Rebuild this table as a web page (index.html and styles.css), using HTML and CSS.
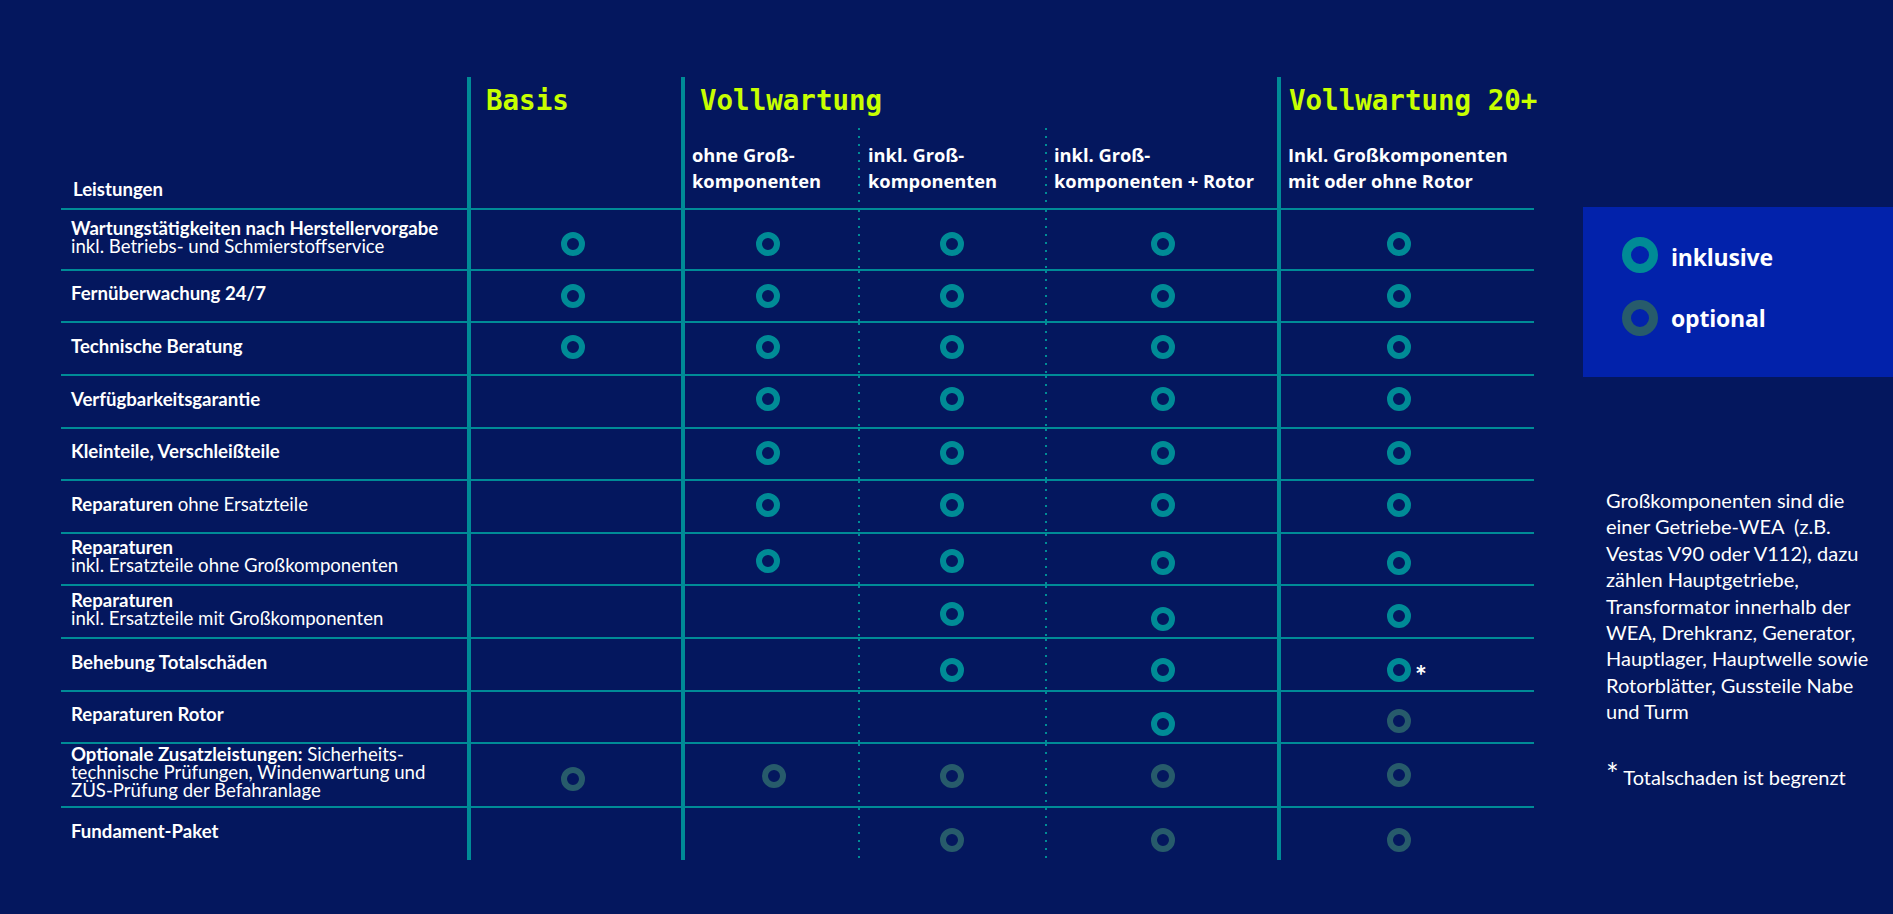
FILE: index.html
```html
<!DOCTYPE html>
<html lang="de">
<head>
<meta charset="utf-8">
<title>Leistungsübersicht Wartung</title>
<link rel="stylesheet" href="styles.css">
</head>
<body>
<main class="page">
  <section class="matrix">
    <div class="hd-label">Leistungen</div>
    <div class="hd-title c2 basis">Basis</div>
    <div class="hd-title c3 voll">Vollwartung</div>
    <div class="hd-title c6 plus">Vollwartung 20+</div>
    <div class="hd-sub c2"></div>
    <div class="hd-sub c3">ohne Groß-<br>komponenten</div>
    <div class="hd-sub c4">inkl. Groß-<br>komponenten</div>
    <div class="hd-sub c5">inkl. Groß-<br>komponenten + Rotor</div>
    <div class="hd-sub c6">Inkl. Großkomponenten<br>mit oder ohne Rotor</div>

    <div class="cell lbl"><div><b>Wartungstätigkeiten nach Herstellervorgabe</b><br>inkl. Betriebs- und Schmierstoffservice</div></div>
    <div class="cell mk c2"><span class="dot y4"></span></div>
    <div class="cell mk c3"><span class="dot y4"></span></div>
    <div class="cell mk c4"><span class="dot y4"></span></div>
    <div class="cell mk c5"><span class="dot y4"></span></div>
    <div class="cell mk c6"><span class="dot y4"></span></div>

    <div class="cell lbl"><div><b>Fernüberwachung 24/7</b></div></div>
    <div class="cell mk c2"><span class="dot"></span></div>
    <div class="cell mk c3"><span class="dot"></span></div>
    <div class="cell mk c4"><span class="dot"></span></div>
    <div class="cell mk c5"><span class="dot"></span></div>
    <div class="cell mk c6"><span class="dot"></span></div>

    <div class="cell lbl"><div><b>Technische Beratung</b></div></div>
    <div class="cell mk c2"><span class="dot u2"></span></div>
    <div class="cell mk c3"><span class="dot u2"></span></div>
    <div class="cell mk c4"><span class="dot u2"></span></div>
    <div class="cell mk c5"><span class="dot u2"></span></div>
    <div class="cell mk c6"><span class="dot u2"></span></div>

    <div class="cell lbl"><div><b>Verfügbarkeitsgarantie</b></div></div>
    <div class="cell mk c2"></div>
    <div class="cell mk c3"><span class="dot u3"></span></div>
    <div class="cell mk c4"><span class="dot u3"></span></div>
    <div class="cell mk c5"><span class="dot u3"></span></div>
    <div class="cell mk c6"><span class="dot u3"></span></div>

    <div class="cell lbl"><div><b>Kleinteile, Verschleißteile</b></div></div>
    <div class="cell mk c2"></div>
    <div class="cell mk c3"><span class="dot u1"></span></div>
    <div class="cell mk c4"><span class="dot u1"></span></div>
    <div class="cell mk c5"><span class="dot u1"></span></div>
    <div class="cell mk c6"><span class="dot u1"></span></div>

    <div class="cell lbl"><div><b>Reparaturen</b> ohne Ersatzteile</div></div>
    <div class="cell mk c2"></div>
    <div class="cell mk c3"><span class="dot u2"></span></div>
    <div class="cell mk c4"><span class="dot u2"></span></div>
    <div class="cell mk c5"><span class="dot u2"></span></div>
    <div class="cell mk c6"><span class="dot u2"></span></div>

    <div class="cell lbl"><div><b>Reparaturen</b><br>inkl. Ersatzteile ohne Großkomponenten</div></div>
    <div class="cell mk c2"></div>
    <div class="cell mk c3"><span class="dot y2"></span></div>
    <div class="cell mk c4"><span class="dot y2"></span></div>
    <div class="cell mk c5"><span class="dot y4"></span></div>
    <div class="cell mk c6"><span class="dot y4"></span></div>

    <div class="cell lbl"><div><b>Reparaturen</b><br>inkl. Ersatzteile mit Großkomponenten</div></div>
    <div class="cell mk c2"></div>
    <div class="cell mk c3"></div>
    <div class="cell mk c4"><span class="dot y2"></span></div>
    <div class="cell mk c5"><span class="dot y7"></span></div>
    <div class="cell mk c6"><span class="dot y4"></span></div>

    <div class="cell lbl"><div><b>Behebung Totalschäden</b></div></div>
    <div class="cell mk c2"></div>
    <div class="cell mk c3"></div>
    <div class="cell mk c4"><span class="dot y5"></span></div>
    <div class="cell mk c5"><span class="dot y5"></span></div>
    <div class="cell mk c6"><span class="starred y5"><span class="dot"></span><span class="star">*</span></span></div>

    <div class="cell lbl"><div><b>Reparaturen Rotor</b></div></div>
    <div class="cell mk c2"></div>
    <div class="cell mk c3"></div>
    <div class="cell mk c4"></div>
    <div class="cell mk c5"><span class="dot y7"></span></div>
    <div class="cell mk c6"><span class="dot opt y4"></span></div>

    <div class="cell lbl"><div><b>Optionale Zusatzleistungen:</b> Sicherheits-<br>technische Prüfungen, Windenwartung und<br>ZÜS-Prüfung der Befahranlage</div></div>
    <div class="cell mk c2"><span class="dot opt y4"></span></div>
    <div class="cell mk c3"><span class="dot opt y1 x6"></span></div>
    <div class="cell mk c4"><span class="dot opt y1"></span></div>
    <div class="cell mk c5"><span class="dot opt y1"></span></div>
    <div class="cell mk c6"><span class="dot opt"></span></div>

    <div class="cell lbl"><div><b>Fundament-Paket</b></div></div>
    <div class="cell mk c2"></div>
    <div class="cell mk c3"></div>
    <div class="cell mk c4"><span class="dot opt y5"></span></div>
    <div class="cell mk c5"><span class="dot opt y6"></span></div>
    <div class="cell mk c6"><span class="dot opt y6"></span></div>
  </section>

  <aside class="side">
    <div class="legend">
      <div class="legend-item"><span class="ldot"></span><span class="legend-text">inklusive</span></div>
      <div class="legend-item"><span class="ldot opt"></span><span class="legend-text up">optional</span></div>
    </div>
    <p class="note">Großkomponenten sind die<br>einer Getriebe-WEA&nbsp; (z.B.<br>Vestas V90 oder V112), dazu<br>zählen Hauptgetriebe,<br>Transformator innerhalb der<br>WEA, Drehkranz, Generator,<br>Hauptlager, Hauptwelle sowie<br>Rotorblätter, Gussteile Nabe<br>und Turm</p>
    <p class="foot"><span class="ast">*</span> Totalschaden ist begrenzt</p>
  </aside>
</main>
</body>
</html>
```
FILE: styles.css
```css
:root {
  --bg: #04175e;
  --teal: #008b96;
  --opt: #275b6b;
  --lime: #c8ff00;
  --legend: #0222ab;
}

html, body {
  margin: 0;
  background: var(--bg);
  color: #ffffff;
  font-family: Lato, "Liberation Sans", sans-serif;
}

.page {
  display: flex;
  align-items: flex-start;
  gap: 49px;
  padding: 77px 0 0 61px;
  min-height: 914px;
  box-sizing: border-box;
}

.matrix {
  flex: none;
  display: grid;
  grid-template-columns: 406px 214px 177px 187px 232px 257px;
  grid-template-rows: 51px 80px 61px 52px 53px 53px 52px 53px 52px 53px 53px 52px 64px 54px;
}

.matrix > div {
  box-sizing: border-box;
  min-width: 0;
}

.c2, .c3, .c6 {
  border-left: 4px solid var(--teal);
}

.c4, .c5 {
  background: repeating-linear-gradient(to bottom, var(--teal) 0 2px, transparent 2px 8px) left top / 2px 100% no-repeat;
}

.hd-label {
  grid-row: span 2;
  align-self: end;
  font: 700 18.6px/18px Lato, sans-serif;
  padding: 0 0 10px 12px;
}

.hd-title {
  font: 700 27.5px/28px "DejaVu Sans Mono", monospace;
  color: var(--lime);
  padding-top: 9px;
  white-space: nowrap;
}
.hd-title.basis { padding-left: 15px; }
.hd-title.voll { grid-column: span 3; padding-left: 15px; }
.hd-title.plus { padding-left: 8px; }

.hd-sub {
  font: 700 18.3px/26px "Open Sans", sans-serif;
  padding-top: 14px;
  white-space: nowrap;
}
.hd-sub.c3 { padding-left: 7px; }
.hd-sub.c4 { padding-left: 10px; }
.hd-sub.c5 { padding-left: 9px; }
.hd-sub.c6 { padding-left: 7px; }

.cell {
  border-top: 2px solid var(--teal);
}

.lbl {
  display: flex;
  align-items: center;
  padding: 0 0 6px 10px;
  font: 400 18.6px/18px Lato, sans-serif;
  white-space: nowrap;
}
.lbl b { font-weight: 700; }

.mk {
  display: flex;
  align-items: center;
  justify-content: center;
}
.mk.c2 { padding-right: 6px; }
.mk.c3 { padding-right: 7px; }
.mk.c5 { padding-left: 4px; }
.mk.c6 { padding-right: 17px; }

.dot {
  flex: none;
  width: 24px;
  height: 24px;
  box-sizing: border-box;
  border: 6px solid var(--teal);
  border-radius: 50%;
}
.dot.opt { border-color: var(--opt); }

.y1 { margin-top: 2px; }
.y2 { margin-top: 4px; }
.y4 { margin-top: 8px; }
.y5 { margin-top: 11px; }
.y6 { margin-top: 12px; }
.y7 { margin-top: 14px; }
.u1 { margin-bottom: 2px; }
.u2 { margin-bottom: 4px; }
.u3 { margin-bottom: 6px; }
.x6 { margin-left: 12px; }

.starred {
  position: relative;
  display: flex;
}
.star {
  position: absolute;
  left: 28px;
  top: 3px;
  font: 700 28px/28px Lato, sans-serif;
  color: #ffffff;
}

.side {
  flex: none;
  width: 310px;
  margin-top: 130px;
}

.legend {
  height: 170px;
  box-sizing: border-box;
  background: var(--legend);
  padding: 30px 0 0 39px;
  display: flex;
  flex-direction: column;
  gap: 27px;
}

.legend-item {
  display: flex;
  align-items: center;
  gap: 13px;
  font: 700 23px/23px "Open Sans", sans-serif;
  letter-spacing: -0.2px;
}
.legend-text { padding-top: 4px; }
.legend-text.up { padding-top: 0; }

.ldot {
  flex: none;
  width: 36px;
  height: 36px;
  box-sizing: border-box;
  border: 9px solid var(--teal);
  border-radius: 50%;
}
.ldot.opt { border-color: var(--opt); }

.note, .foot {
  margin: 0;
  padding-left: 23px;
  font: 400 20px/26.4px Lato, sans-serif;
  white-space: nowrap;
}
.note { margin-top: 110px; }
.foot { margin-top: 35px; }
.ast { font-size: 30px; }
```
